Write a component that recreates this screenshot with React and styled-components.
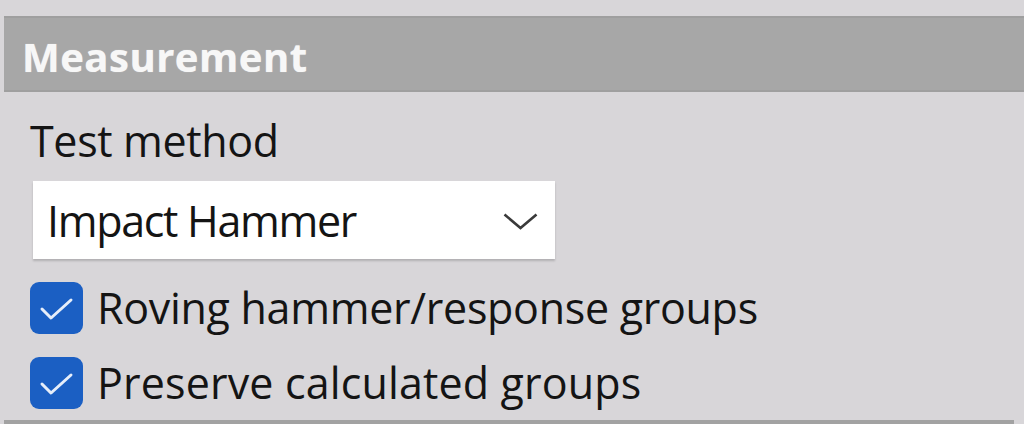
import React from "react";
import styled, { createGlobalStyle } from "styled-components";

const Global = createGlobalStyle`
  html, body { margin: 0; padding: 0; }
  body {
    background: #d8d6d9;
    font-family: "Open Sans", "Noto Sans", sans-serif;
    color: #141414;
    overflow: hidden;
  }
`;

const Page = styled.div`
  width: 1024px;
  height: 424px;
  padding: 16px 0 0 4px;
  box-sizing: border-box;
  overflow: hidden;
`;

const Panel = styled.section`
  height: 404px;
  overflow: hidden;
`;

const Header = styled.div`
  height: 76px;
  box-sizing: border-box;
  padding: 12px 0 0 18px;
  background: #a7a7a7;
  border-top: 2px solid #9f9f9f;
  border-bottom: 2px solid #9f9f9f;
  color: #f7f7f7;
  font-weight: 700;
  font-size: 40px;
  line-height: 54px;
  letter-spacing: 0.5px;
  text-shadow: 0 0 1px rgba(255, 255, 255, 0.6);
`;

const Body = styled.div`
  padding: 20px 0 0 26px;
`;

const Label = styled.div`
  font-size: 43px;
  line-height: 58px;
  letter-spacing: -0.35px;
  height: 58px;
`;

const Select = styled.div`
  margin: 11px 0 0 3px;
  width: 522px;
  height: 78px;
  box-sizing: border-box;
  background: #ffffff;
  box-shadow: 0 2px 2px rgba(0, 0, 0, 0.18);
  display: flex;
  align-items: flex-start;
  justify-content: space-between;
  padding: 11px 17px 0 14px;
`;

const SelectText = styled.span`
  font-size: 43px;
  line-height: 58px;
  letter-spacing: -1.3px;
`;

const Chevron = styled.svg`
  width: 35px;
  height: 17px;
  margin-top: 21px;
`;

const List = styled.div`
  margin-top: 11px;
`;

const Row = styled.div`
  height: 75px;
  display: flex;
  align-items: center;
`;

const Box = styled.div`
  width: 53px;
  height: 52px;
  border-radius: 9px;
  background: ${(p) => (p.checked ? "#1b5fc3" : "#ffffff")};
  display: flex;
  align-items: center;
  justify-content: center;
  flex-shrink: 0;
`;

const RowText = styled.span`
  margin-left: 14px;
  font-size: 43px;
  line-height: 58px;
  letter-spacing: ${(p) => p.$spacing}px;
  white-space: nowrap;
`;

const Divider = styled.div`
  height: 4px;
  margin-right: 10px;
  background: #a2a2a2;
`;

const Check = () => (
  <svg width="53" height="52" viewBox="0 0 53 52">
    <polyline
      points="12,27 21,36 41,18"
      fill="none"
      stroke="#e6eefa"
      strokeWidth="3"
      strokeLinecap="round"
      strokeLinejoin="round"
    />
  </svg>
);

const Checkbox = ({ checked, spacing, children }) => (
  <Row>
    <Box checked={checked}>{checked && <Check />}</Box>
    <RowText $spacing={spacing}>{children}</RowText>
  </Row>
);

export default function App() {
  return (
    <>
      <Global />
      <Page>
        <Panel>
          <Header>Measurement</Header>
          <Body>
            <Label>Test method</Label>
            <Select>
              <SelectText>Impact Hammer</SelectText>
              <Chevron viewBox="0 0 35 17">
                <polyline
                  points="1.5,1.5 17.5,15 33.5,1.5"
                  fill="none"
                  stroke="#3a3a3a"
                  strokeWidth="2.6"
                />
              </Chevron>
            </Select>
            <List>
              <Checkbox checked spacing={-0.3}>
                Roving hammer/response groups
              </Checkbox>
              <Checkbox checked spacing={0.15}>
                Preserve calculated groups
              </Checkbox>
            </List>
          </Body>
        </Panel>
        <Divider />
      </Page>
    </>
  );
}
